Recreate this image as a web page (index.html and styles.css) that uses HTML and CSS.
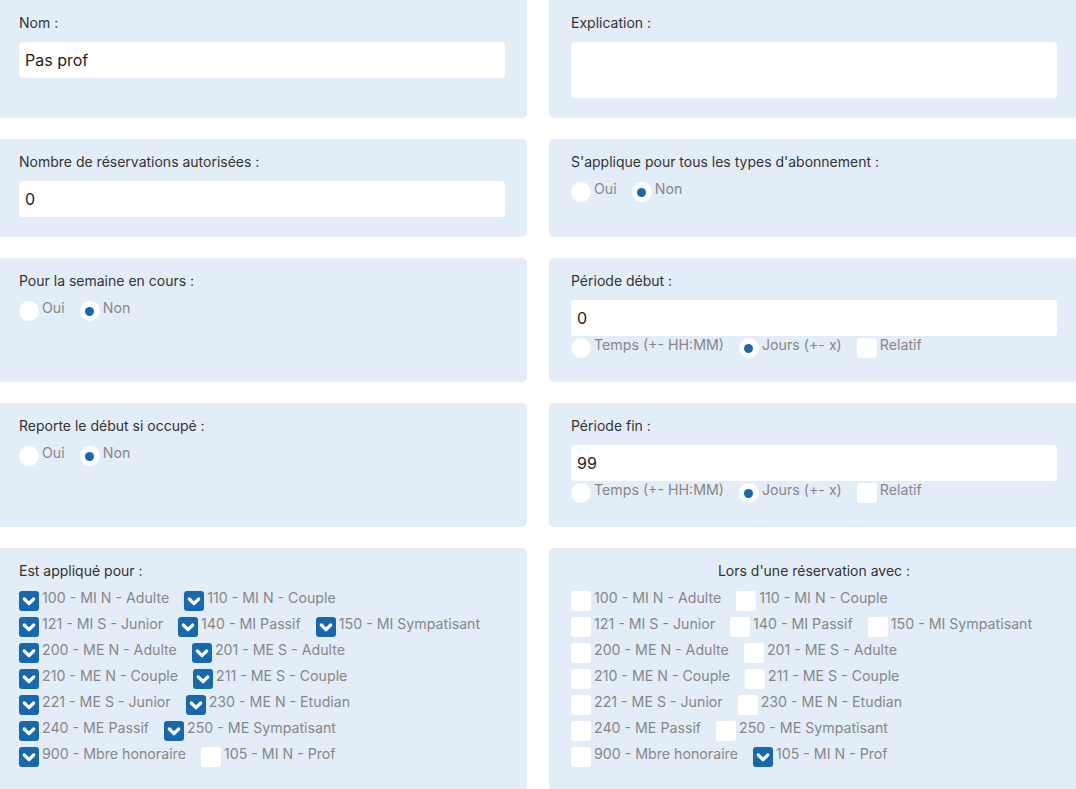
FILE: index.html
```html
<!DOCTYPE html>
<html lang="fr">
<head>
<meta charset="utf-8">
<title>Règle</title>
<link rel="stylesheet" href="styles.css">
</head>
<body>
<div class="page">
  <section class="card">
    <div class="lbl">Nom :</div>
    <div class="input">Pas prof</div>
  </section>
  <section class="card">
    <div class="lbl">Explication :</div>
    <div class="textarea"></div>
  </section>

  <section class="card">
    <div class="lbl">Nombre de réservations autorisées :</div>
    <div class="input">0</div>
  </section>
  <section class="card">
    <div class="lbl tight">S'applique pour tous les types d'abonnement :</div>
    <div class="row">
      <label class="opt"><span class="radio"></span><span class="txt">Oui</span></label>
      <label class="opt"><span class="radio on"></span><span class="txt">Non</span></label>
    </div>
  </section>

  <section class="card">
    <div class="lbl tight">Pour la semaine en cours :</div>
    <div class="row">
      <label class="opt"><span class="radio"></span><span class="txt">Oui</span></label>
      <label class="opt"><span class="radio on"></span><span class="txt">Non</span></label>
    </div>
  </section>
  <section class="card">
    <div class="lbl">Période début :</div>
    <div class="input">0</div>
    <div class="row">
      <label class="opt"><span class="radio"></span><span class="txt">Temps (+- HH:MM)</span></label>
      <label class="opt"><span class="radio on"></span><span class="txt">Jours (+- x)</span></label>
      <label class="opt"><span class="box"></span><span class="txt">Relatif</span></label>
    </div>
  </section>

  <section class="card">
    <div class="lbl tight">Reporte le début si occupé :</div>
    <div class="row">
      <label class="opt"><span class="radio"></span><span class="txt">Oui</span></label>
      <label class="opt"><span class="radio on"></span><span class="txt">Non</span></label>
    </div>
  </section>
  <section class="card">
    <div class="lbl">Période fin :</div>
    <div class="input">99</div>
    <div class="row">
      <label class="opt"><span class="radio"></span><span class="txt">Temps (+- HH:MM)</span></label>
      <label class="opt"><span class="radio on"></span><span class="txt">Jours (+- x)</span></label>
      <label class="opt"><span class="box"></span><span class="txt">Relatif</span></label>
    </div>
  </section>

  <section class="card">
    <div class="lbl tight">Est appliqué pour :</div>
    <div class="row">
      <label class="opt"><span class="box on"><svg viewBox="0 0 20 20"><path d="M5.3 8 L10 12.7 L14.7 8"/></svg></span><span class="txt">100 - MI N - Adulte</span></label>
      <label class="opt"><span class="box on"><svg viewBox="0 0 20 20"><path d="M5.3 8 L10 12.7 L14.7 8"/></svg></span><span class="txt">110 - MI N - Couple</span></label>
    </div>
    <div class="row">
      <label class="opt"><span class="box on"><svg viewBox="0 0 20 20"><path d="M5.3 8 L10 12.7 L14.7 8"/></svg></span><span class="txt">121 - MI S - Junior</span></label>
      <label class="opt"><span class="box on"><svg viewBox="0 0 20 20"><path d="M5.3 8 L10 12.7 L14.7 8"/></svg></span><span class="txt">140 - MI Passif</span></label>
      <label class="opt"><span class="box on"><svg viewBox="0 0 20 20"><path d="M5.3 8 L10 12.7 L14.7 8"/></svg></span><span class="txt">150 - MI Sympatisant</span></label>
    </div>
    <div class="row">
      <label class="opt"><span class="box on"><svg viewBox="0 0 20 20"><path d="M5.3 8 L10 12.7 L14.7 8"/></svg></span><span class="txt">200 - ME N - Adulte</span></label>
      <label class="opt"><span class="box on"><svg viewBox="0 0 20 20"><path d="M5.3 8 L10 12.7 L14.7 8"/></svg></span><span class="txt">201 - ME S - Adulte</span></label>
    </div>
    <div class="row">
      <label class="opt"><span class="box on"><svg viewBox="0 0 20 20"><path d="M5.3 8 L10 12.7 L14.7 8"/></svg></span><span class="txt">210 - ME N - Couple</span></label>
      <label class="opt"><span class="box on"><svg viewBox="0 0 20 20"><path d="M5.3 8 L10 12.7 L14.7 8"/></svg></span><span class="txt">211 - ME S - Couple</span></label>
    </div>
    <div class="row">
      <label class="opt"><span class="box on"><svg viewBox="0 0 20 20"><path d="M5.3 8 L10 12.7 L14.7 8"/></svg></span><span class="txt">221 - ME S - Junior</span></label>
      <label class="opt"><span class="box on"><svg viewBox="0 0 20 20"><path d="M5.3 8 L10 12.7 L14.7 8"/></svg></span><span class="txt">230 - ME N - Etudian</span></label>
    </div>
    <div class="row">
      <label class="opt"><span class="box on"><svg viewBox="0 0 20 20"><path d="M5.3 8 L10 12.7 L14.7 8"/></svg></span><span class="txt">240 - ME Passif</span></label>
      <label class="opt"><span class="box on"><svg viewBox="0 0 20 20"><path d="M5.3 8 L10 12.7 L14.7 8"/></svg></span><span class="txt">250 - ME Sympatisant</span></label>
    </div>
    <div class="row">
      <label class="opt"><span class="box on"><svg viewBox="0 0 20 20"><path d="M5.3 8 L10 12.7 L14.7 8"/></svg></span><span class="txt">900 - Mbre honoraire</span></label>
      <label class="opt"><span class="box"></span><span class="txt">105 - MI N - Prof</span></label>
    </div>
  </section>
  <section class="card">
    <div class="lbl tight center">Lors d'une réservation avec :</div>
    <div class="row">
      <label class="opt"><span class="box"></span><span class="txt">100 - MI N - Adulte</span></label>
      <label class="opt"><span class="box"></span><span class="txt">110 - MI N - Couple</span></label>
    </div>
    <div class="row">
      <label class="opt"><span class="box"></span><span class="txt">121 - MI S - Junior</span></label>
      <label class="opt"><span class="box"></span><span class="txt">140 - MI Passif</span></label>
      <label class="opt"><span class="box"></span><span class="txt">150 - MI Sympatisant</span></label>
    </div>
    <div class="row">
      <label class="opt"><span class="box"></span><span class="txt">200 - ME N - Adulte</span></label>
      <label class="opt"><span class="box"></span><span class="txt">201 - ME S - Adulte</span></label>
    </div>
    <div class="row">
      <label class="opt"><span class="box"></span><span class="txt">210 - ME N - Couple</span></label>
      <label class="opt"><span class="box"></span><span class="txt">211 - ME S - Couple</span></label>
    </div>
    <div class="row">
      <label class="opt"><span class="box"></span><span class="txt">221 - ME S - Junior</span></label>
      <label class="opt"><span class="box"></span><span class="txt">230 - ME N - Etudian</span></label>
    </div>
    <div class="row">
      <label class="opt"><span class="box"></span><span class="txt">240 - ME Passif</span></label>
      <label class="opt"><span class="box"></span><span class="txt">250 - ME Sympatisant</span></label>
    </div>
    <div class="row">
      <label class="opt"><span class="box"></span><span class="txt">900 - Mbre honoraire</span></label>
      <label class="opt"><span class="box on"><svg viewBox="0 0 20 20"><path d="M5.3 8 L10 12.7 L14.7 8"/></svg></span><span class="txt">105 - MI N - Prof</span></label>
    </div>
  </section>
</div>
</body>
</html>
```

FILE: styles.css
```css
html, body {
  overflow: hidden;
}

body {
  margin: 0;
  background: #ffffff;
  font-family: Inter, "Noto Sans", sans-serif;
}

.page {
  display: grid;
  grid-template-columns: 530px 530px;
  column-gap: 22px;
  row-gap: 21px;
  margin-left: -3px;
}

.card {
  background: #e3edf7;
  padding: 14px 22px 20px 22px;
  border-radius: 5px;
}

.card:nth-child(odd) {
  border-top-left-radius: 0;
  border-bottom-left-radius: 0;
}

.card:nth-child(even) {
  border-top-right-radius: 0;
  border-bottom-right-radius: 0;
}

.card:nth-child(-n+2) {
  border-top-left-radius: 0;
  border-top-right-radius: 0;
}

.lbl {
  font-size: 14px;
  line-height: 18px;
  color: #333333;
  margin-bottom: 10px;
}

.lbl.tight {
  margin-bottom: 9px;
}

.lbl.center {
  text-align: center;
}

.input {
  height: 36px;
  background: #ffffff;
  border-radius: 4px;
  padding: 0 6px;
  font-size: 16px;
  line-height: 36px;
  color: #222222;
}

.textarea {
  height: 56px;
  background: #ffffff;
  border-radius: 4px;
}

.row {
  display: flex;
  height: 26px;
}

.opt {
  display: inline-flex;
  align-items: flex-start;
  margin-right: 15px;
}

.txt {
  font-size: 14.2px;
  line-height: 18px;
  color: #878787;
  margin-left: 3px;
}

.radio {
  position: relative;
  width: 20px;
  height: 20px;
  margin-top: 2px;
  border-radius: 50%;
  background: #ffffff;
  flex: none;
}

.radio.on::after {
  content: "";
  position: absolute;
  left: 5.5px;
  top: 5.5px;
  width: 9px;
  height: 9px;
  border-radius: 50%;
  background: #1769ae;
}

.box {
  display: block;
  width: 20px;
  height: 20px;
  margin-top: 2px;
  border-radius: 3px;
  background: #ffffff;
  flex: none;
}

.box.on {
  background: #1769ae;
}

.box svg {
  display: block;
  width: 20px;
  height: 20px;
}

.box svg path {
  fill: none;
  stroke: #ffffff;
  stroke-width: 3.2;
  stroke-linecap: round;
  stroke-linejoin: round;
}
```
